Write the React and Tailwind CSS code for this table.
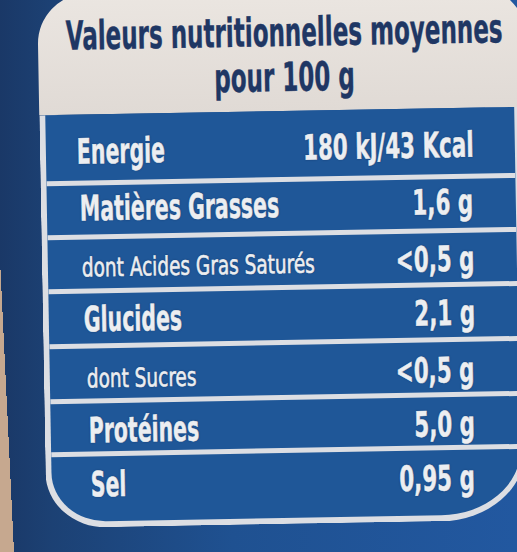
import React from 'react';

const rows = [
  { label: 'Energie', value: '180 kJ/43 Kcal', bold: true, first: true, h: 'h-[66px]', pl: 'pl-[31px]', pr: 'pr-[41px]', lmt: 'mt-[20px]', vmt: 'mt-[20px]' },
  { label: 'Matières Grasses', value: '1,6 g', bold: true, h: 'h-[54px]', pl: 'pl-[33px]', pr: 'pr-[43px]', lmt: 'mt-[6px]', vmt: 'mt-[6px]' },
  { label: 'dont Acides Gras Saturés', value: '<0,5 g', bold: false, h: 'h-[54px]', pl: 'pl-[34px]', pr: 'pr-[42px]', lmt: 'mt-[15px]', vmt: 'mt-[9px]' },
  { label: 'Glucides', value: '2,1 g', bold: true, h: 'h-[55px]', pl: 'pl-[35px]', pr: 'pr-[43px]', lmt: 'mt-[9px]', vmt: 'mt-[9px]' },
  { label: 'dont Sucres', value: '<0,5 g', bold: false, h: 'h-[55px]', pl: 'pl-[37px]', pr: 'pr-[44px]', lmt: 'mt-[17px]', vmt: 'mt-[11px]' },
  { label: 'Protéines', value: '5,0 g', bold: true, h: 'h-[53px]', pl: 'pl-[38px]', pr: 'pr-[45px]', lmt: 'mt-[10px]', vmt: 'mt-[10px]' },
  { label: 'Sel', value: '0,95 g', bold: true, h: 'h-[70px]', pl: 'pl-[39px]', pr: 'pr-[46px]', lmt: 'mt-[11px]', vmt: 'mt-[11px]' },
];

function Row({ row }) {
  return (
    <div className={`flex items-start ${row.h} ${row.pl} ${row.pr} ${row.first ? '' : 'border-t-[5px] border-[#dcdee3]'}`}>
      <div className="flex-1 min-w-0">
        {row.bold ? (
          <span className={`${row.lmt} block w-max whitespace-nowrap origin-left scale-x-[0.65] text-[35px] leading-none font-bold [-webkit-text-stroke:0.5px_#eceef1]`}>
            {row.label}
          </span>
        ) : (
          <span className={`${row.lmt} block w-max whitespace-nowrap origin-left scale-x-[0.79] text-[26px] leading-none [-webkit-text-stroke:0.6px_#eceef1]`}>
            {row.label}
          </span>
        )}
      </div>
      <span className={`${row.vmt} shrink-0 inline-block whitespace-nowrap origin-right scale-x-[0.68] text-[35px] leading-none font-bold [-webkit-text-stroke:0.5px_#eceef1]`}>
        {row.value}
      </span>
    </div>
  );
}

export default function App() {
  return (
    <div className="w-[517px] h-[552px] overflow-hidden flex bg-[linear-gradient(90deg,#1a3867_0%,#1c4174_10%,#1f5191_45%,#2258a0_100%)] font-['DejaVu_Sans_Condensed','DejaVu_Sans',sans-serif]">
      {/* edge of the surface the pack stands on */}
      <div className="w-[14px] shrink-0 flex flex-col">
        <div className="h-[260px] shrink-0" />
        <div className="flex-1 bg-[linear-gradient(to_top_right,#c6a88f_50%,transparent_50%)]" />
      </div>

      <div className="ml-[28px] -mt-[10px] w-[488px] shrink-0 flex flex-col items-start rotate-[-1deg]">
        {/* header */}
        <div className="w-[488px] h-[121px] pt-[20px] pl-[4px] rounded-tl-[50px] rounded-tr-[50px] bg-[linear-gradient(180deg,#ebe6e1,#e0dad5)] text-[#1f3764]">
          <div className="flex justify-center h-[45px]">
            <span className="inline-block whitespace-nowrap origin-center scale-x-[0.64] text-[40px] leading-[45px] font-bold [-webkit-text-stroke:0.4px_#1f3764]">
              Valeurs nutritionnelles moyennes
            </span>
          </div>
          <div className="flex justify-center h-[45px]">
            <span className="inline-block whitespace-nowrap origin-center scale-x-[0.64] text-[40px] leading-[45px] font-bold [-webkit-text-stroke:0.4px_#1f3764]">
              pour 100 g
            </span>
          </div>
        </div>

        {/* table */}
        <div className="w-[480px] flex flex-col overflow-hidden bg-[#1f5798] text-[#eceef1] border-l-[6px] border-b-[6px] border-r-[5px] border-[#dcdee3] rounded-bl-[60px_55px] rounded-br-[85px_70px] [text-shadow:0_0_2px_rgba(10,25,60,0.7)]">
          {rows.map((row) => (
            <Row key={row.label} row={row} />
          ))}
        </div>
      </div>
    </div>
  );
}
